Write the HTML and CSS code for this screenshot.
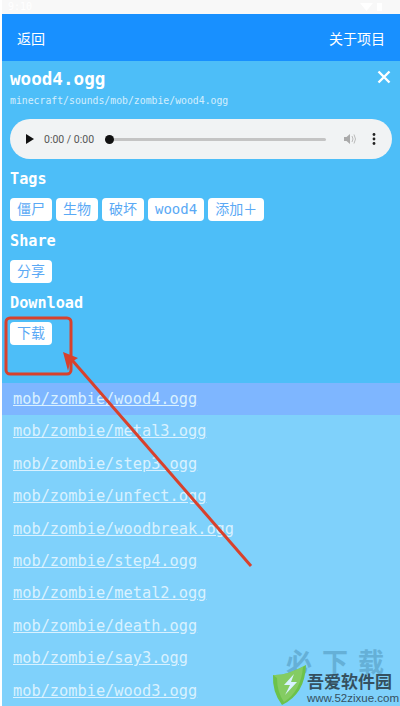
FILE: index.html
```html
<!DOCTYPE html>
<html lang="zh">
<head>
  <meta charset="UTF-8">
  <meta name="viewport" content="width=device-width, initial-scale=1.0">
  <title>wood4.ogg</title>
  <link rel="stylesheet" href="styles.css">
</head>
<body>
  <div class="screen">
    <div class="status-bar">
      <span class="status-time">9:10</span>
      <span class="status-icons">
        <svg width="13" height="8" viewBox="0 0 13 8"><path d="M0 0 H13 L6.5 8 Z" fill="#fff"/></svg>
        <svg width="5" height="8" viewBox="0 0 5 8"><rect width="5" height="8" fill="#fff"/></svg>
      </span>
    </div>
    <div class="nav-bar">
      <span>返回</span>
      <span>关于项目</span>
    </div>

    <div class="panel">
      <div class="title-row">
        <div class="file-name">wood4.ogg</div>
        <svg class="close-icon" width="14" height="14" viewBox="0 0 14 14">
          <path d="M1.5 1.5 L12.5 12.5 M12.5 1.5 L1.5 12.5" stroke="#fff" stroke-width="2.4" fill="none"/>
        </svg>
      </div>
      <div class="file-path">minecraft/sounds/mob/zombie/wood4.ogg</div>

      <div class="player">
        <svg width="8" height="10" viewBox="0 0 8 10"><path d="M0 0 L8 5 L0 10 Z" fill="#111"/></svg>
        <span class="player-time">0:00 / 0:00</span>
        <div class="player-track"><span class="player-knob"></span></div>
        <svg class="player-volume" width="13" height="12" viewBox="0 0 13 12">
          <path d="M0 4 H2.5 L6 1 V11 L2.5 8 H0 Z" fill="#aaa"/>
          <path d="M8 3 Q10 6 8 9 M10 1.5 Q13 6 10 10.5" stroke="#bbb" fill="none"/>
        </svg>
        <svg width="4" height="12" viewBox="0 0 4 12">
          <circle cx="2" cy="1.5" r="1.4" fill="#222"/>
          <circle cx="2" cy="6" r="1.4" fill="#222"/>
          <circle cx="2" cy="10.5" r="1.4" fill="#222"/>
        </svg>
      </div>

      <div class="section-title">Tags</div>
      <div class="button-row">
        <span class="tag">僵尸</span>
        <span class="tag">生物</span>
        <span class="tag">破坏</span>
        <span class="tag">wood4</span>
        <span class="tag">添加＋</span>
      </div>
      <div class="section-title">Share</div>
      <div class="button-row">
        <span class="tag">分享</span>
      </div>
      <div class="section-title">Download</div>
      <div class="button-row">
        <span class="tag">下载</span>
      </div>
    </div>

    <div class="file-list">
      <a class="file-item active">mob/zombie/wood4.ogg</a>
      <a class="file-item">mob/zombie/metal3.ogg</a>
      <a class="file-item">mob/zombie/step3.ogg</a>
      <a class="file-item">mob/zombie/unfect.ogg</a>
      <a class="file-item">mob/zombie/woodbreak.ogg</a>
      <a class="file-item">mob/zombie/step4.ogg</a>
      <a class="file-item">mob/zombie/metal2.ogg</a>
      <a class="file-item">mob/zombie/death.ogg</a>
      <a class="file-item">mob/zombie/say3.ogg</a>
      <a class="file-item">mob/zombie/wood3.ogg</a>
    </div>
  </div>

  <!-- red annotation drawn on top of the screenshot -->
  <svg class="annotation" width="400" height="706" viewBox="0 0 400 706">
    <rect x="6" y="318" width="65" height="56" rx="4" fill="none" stroke="#d8412c" stroke-width="3"/>
    <path d="M251 566 L72 360" stroke="#d8412c" stroke-width="3" fill="none"/>
    <path d="M63 352 L78 358 L70 363 L68 371 Z" fill="#d8412c"/>
  </svg>

  <div class="watermark">
    <div class="watermark-faded">必下载</div>
    <svg class="watermark-logo" width="36" height="42" viewBox="0 0 36 42">
      <path d="M1 11 Q14 12 34 1 Q33 30 10 41 Q0 28 1 11 Z" fill="#6cc24a"/>
      <path d="M1 11 Q14 12 34 1 L31 3 Q29 27 12 38 Q5 28 5 14 Z" fill="#8fd06c" opacity="0.7"/>
      <path d="M22 10 L12 21 H18 L13 31 L25 18 H19 Z" fill="#d8f2ff"/>
    </svg>
    <div class="watermark-name">吾爱软件园</div>
    <div class="watermark-url">www.52zixue.com</div>
  </div>
</body>
</html>
```

FILE: styles.css
```css
html, body {
  margin: 0;
  padding: 0;
  background: #fff;
}
body {
  position: relative;
  width: 400px;
  height: 706px;
  overflow: hidden;
  font-family: "DejaVu Sans Mono", "Noto Sans CJK SC", monospace;
}
.screen {
  margin-left: 2px;
  height: 706px;
  overflow: hidden;
}

.status-bar {
  display: flex;
  justify-content: space-between;
  align-items: center;
  height: 13px;
  padding: 0 18px 1px 6px;
  background: #f8f8f8;
}
.status-time {
  font-size: 10px;
  line-height: 12px;
  color: #fff;
}
.status-icons {
  display: flex;
  gap: 4px;
}

.nav-bar {
  display: flex;
  justify-content: space-between;
  align-items: center;
  height: 47px;
  padding: 0 15px;
  background: #1890ff;
  color: #fff;
  font-family: "Noto Sans CJK SC", sans-serif;
  font-size: 14px;
}

.panel {
  height: 322px;
  box-sizing: border-box;
  padding: 6px 8px 0;
  background: #4dbef8;
  color: #fff;
}
.title-row {
  display: flex;
  justify-content: space-between;
}
.file-name {
  font-size: 17.6px;
  font-weight: bold;
  line-height: 24px;
}
.close-icon {
  margin: 3px 1px 0 0;
}
.file-path {
  margin-top: 3px;
  font-size: 9.8px;
  line-height: 14px;
  opacity: 0.75;
}

.player {
  display: flex;
  align-items: center;
  height: 40px;
  margin-top: 11px;
  padding: 0 16px;
  border-radius: 20px;
  background: #f1f3f4;
}
.player-time {
  margin-left: 10px;
  font-family: "Roboto", sans-serif;
  font-size: 10.5px;
  color: #555;
}
.player-track {
  position: relative;
  width: 221px;
  height: 3px;
  margin-left: 11px;
  background: #c4c4c4;
  border-radius: 2px;
}
.player-knob {
  position: absolute;
  left: 0;
  top: -3px;
  width: 9px;
  height: 9px;
  border-radius: 50%;
  background: #111;
}
.player-volume {
  margin: 0 15px 0 18px;
}

.section-title {
  margin-top: 8px;
  font-size: 15.2px;
  font-weight: bold;
  line-height: 24px;
}
.button-row {
  display: flex;
  gap: 4px;
  margin-top: 7px;
}
.tag {
  display: block;
  padding: 0 7px;
  border-radius: 4px;
  background: #fff;
  color: #5aa9f5;
  font-size: 14px;
  line-height: 23px;
}

.file-list {
  background: #7fd1fb;
}
.file-item {
  display: block;
  height: 32.4px;
  padding-left: 11px;
  color: #d9f1ff;
  font-size: 15.3px;
  line-height: 32px;
  text-decoration: underline;
}
.file-item.active {
  background: #7eb6ff;
}

.annotation {
  position: absolute;
  left: 0;
  top: 0;
}

.watermark {
  position: absolute;
  left: 272px;
  top: 650px;
  width: 128px;
  height: 56px;
}
.watermark-faded {
  position: absolute;
  left: 14px;
  top: 0;
  font-family: "Noto Sans CJK SC", sans-serif;
  font-size: 26px;
  font-weight: bold;
  letter-spacing: 10px;
  line-height: 21px;
  color: #5fa9cf;
  opacity: 0.8;
}
.watermark-logo {
  position: absolute;
  left: 0;
  top: 14px;
}
.watermark-name {
  position: absolute;
  left: 35px;
  top: 21px;
  font-family: "Noto Sans CJK SC", sans-serif;
  font-size: 17px;
  font-weight: bold;
  line-height: 20px;
  color: #35505f;
}
.watermark-url {
  position: absolute;
  left: 35px;
  top: 41px;
  font-family: "Liberation Sans", sans-serif;
  font-size: 11.5px;
  line-height: 14px;
  white-space: nowrap;
  color: #35505f;
}
```
